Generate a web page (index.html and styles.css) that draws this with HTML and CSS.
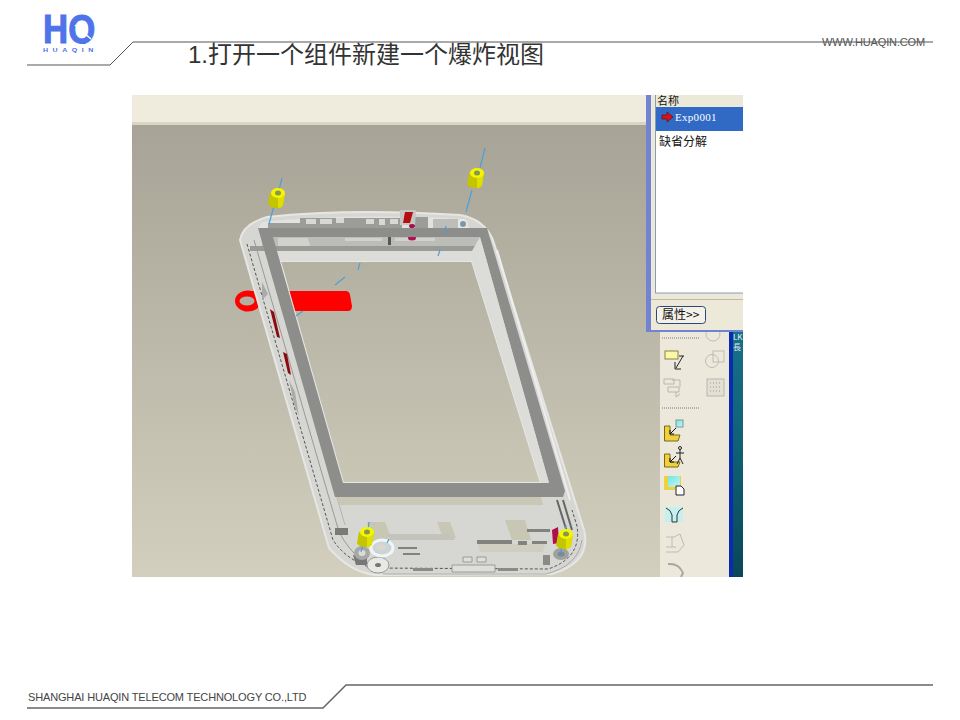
FILE: index.html
```html
<!DOCTYPE html>
<html lang="zh">
<head>
    <meta charset="UTF-8">
    <title>爆炸视图</title>
    <link rel="stylesheet" href="styles.css">
</head>
<body>
    <div class="slide">
        <header class="top">
            <svg class="rule" width="960" height="95">
                <polyline points="27,65 110,65 133,42 933,42" fill="none" stroke="#555" stroke-width="1"></polyline>
            </svg>
            <svg class="logo" width="64" height="46" viewBox="0 0 64 46">
                <defs>
                    <clipPath id="logo-clip"><rect x="0" y="0" width="64" height="31"></rect></clipPath>
                </defs>
                <g clip-path="url(#logo-clip)">
                    <text class="logo-hq" transform="translate(2 30) scale(0.87 1)">HQ</text>
                </g>
                <line x1="34" y1="12" x2="50" y2="26" stroke="#fff" stroke-width="1.5"></line>
                <text class="logo-name" transform="translate(2 39) scale(1.4 1)" textLength="36">HUAQIN</text>
            </svg>
            <h1 class="title">1.打开一个组件新建一个爆炸视图</h1>
            <span class="url">WWW.HUAQIN.COM</span>
        </header>

        <main class="shot">
            <svg width="611" height="482" viewBox="132 95 611 482">
                <defs>
                    <linearGradient id="view" x1="0" y1="0" x2="0" y2="1">
                        <stop offset="0" stop-color="#a7a497"></stop>
                        <stop offset="1" stop-color="#d2cfbe"></stop>
                    </linearGradient>
                    <linearGradient id="teal" x1="0" y1="0" x2="0" y2="1">
                        <stop offset="0" stop-color="#17708a"></stop>
                        <stop offset="0.5" stop-color="#0f5f74"></stop>
                        <stop offset="1" stop-color="#0a4658"></stop>
                    </linearGradient>
                    <linearGradient id="cyan" x1="0" y1="0" x2="1" y2="1">
                        <stop offset="0" stop-color="#6fe6e0"></stop>
                        <stop offset="1" stop-color="#c8f4f0"></stop>
                    </linearGradient>
                    <g id="bolt">
                        <path d="M-7 -4 L-9 7 Q-7 11 -1 11 Q5 11 6 8 L8 -4 Z" fill="#c4c400"></path>
                        <path d="M1 -4 L1 11 Q5 11 6 8 L8 -4 Z" fill="#e0e000"></path>
                        <ellipse cx="1" cy="-4" rx="7" ry="5" fill="#f6f400"></ellipse>
                        <ellipse cx="1" cy="-4" rx="3" ry="2.5" fill="#7f9a50"></ellipse>
                    </g>
                </defs>

                <!-- viewport -->
                <rect x="132" y="125" width="528" height="452" fill="url(#view)"></rect>
                <rect x="132" y="95" width="528" height="29" fill="#efecde"></rect>
                <rect x="132" y="122" width="528" height="3" fill="#d8d5c6"></rect>

                <!-- red part behind the housing -->
                <ellipse cx="248" cy="301" rx="13" ry="10.5" fill="#f00"></ellipse>
                <ellipse cx="247" cy="301" rx="7.5" ry="4.5" fill="#b3b0a2"></ellipse>
                <path d="M250 291 H346 Q349 291 350 295 L352 306 Q352 311 348 311 H262 Z" fill="#f00"></path>

                <!-- housing -->
                <path fill-rule="evenodd" fill="#d6d6d3" stroke="#e6e6e3" stroke-width="2" d="M240 240 Q243 224 267 217 Q350 208 460 215 Q484 219 493 240 L584 530 Q592 562 552 574 L375 575 Q350 572 329 548 Z M280 261 L472 261 L541 483 L343 483 Z"></path>
                <path d="M247 244 L333 540 Q346 560 372 568 L548 569 Q582 558 577 526 L572 510" fill="none" stroke="#555" stroke-width="1" stroke-dasharray="3 2"></path>
                <path d="M254 240 L339 532 Q350 552 362 560" fill="none" stroke="#999" stroke-width="1"></path>
                <path d="M262 240 L345 525" fill="none" stroke="#b4b4b1" stroke-width="1"></path>
                <path d="M497 250 L570 500" fill="none" stroke="#eee" stroke-width="2"></path>
                <path d="M383 574 L546 574 Q578 566 582 540" fill="none" stroke="#aaa" stroke-width="1"></path>

                <!-- top edge details -->
                <path d="M262 222 Q350 213 462 219 L470 228 H258 Z" fill="#e2e2e0"></path>
                <path d="M268 223 H300 V228 H268 Z M300 218 H402 V228 H300 Z M415 217 H428 V228 H415 Z" fill="#9c9c99"></path>
                <path d="M433 219 H458 V228 H433 Z" fill="#bdbdba"></path>
                <path d="M306 219 H316 V224 H306 Z M320 219 H332 V224 H320 Z M336 218 H344 V223 H336 Z M366 219 H374 V224 H366 Z M379 219 H385 V225 H379 Z M390 219 H398 V224 H390 Z" fill="#d8d8d5"></path>
                <path d="M400 210 L416 210 L415 225 L400 225 Z" fill="#c6c6c3"></path>
                <path d="M405 212 L413 212 L410 223 L403 223 Z" fill="#b50d10"></path>
                <ellipse cx="412" cy="226" rx="3" ry="2" fill="#a0104a"></ellipse>
                <circle cx="463" cy="224" r="4" fill="#7b98a8" stroke="#e8e8e6" stroke-width="2"></circle>
                <rect x="262" y="237" width="220" height="9" fill="#bcbcb9"></rect>
                <path d="M278 238 H308 L310 246 H278 Z M345 238 H382 V241 H345 Z M395 238 H435 V241 H395 Z" fill="#d2d2cc"></path>
                <rect x="388" y="237" width="3" height="8" fill="#555"></rect>
                <rect x="250" y="246" width="231" height="5" fill="#9a9a97"></rect>
                <rect x="266" y="251" width="215" height="10" fill="#dcdcd9"></rect>
                <ellipse cx="412" cy="238" rx="4" ry="2.5" fill="#b01050"></ellipse>

                <!-- side buttons -->
                <path d="M270 309 L274 312 L280 338 L277 337 Z" fill="#8d0a10"></path>
                <path d="M283 352 L287 354 L291 375 L288 373 Z" fill="#8d0a10"></path>
                <path d="M262 282 L268 294 L262 300 Z M289 380 L295 392 L299 416 L294 404 Z" fill="#aaa"></path>

                <!-- frame -->
                <path fill-rule="evenodd" fill="#8d8d8b" d="M258 228 H487 L565 491 L563 497 H335 Z M273 237 L480 237 L549 483 H343 Z"></path>
                <path d="M480 237 L549 483 L541 483 L472 261 L472 251 Z" fill="#dcdcd9"></path>

                <!-- bottom details -->
                <path d="M337 497 H541 L543 505 H340 Z" fill="#c9c7b6"></path>
                <path d="M367 522 H385 L390 535 L385 542 H372 Z M437 522 H450 L456 538 H443 Z M505 520 H525 L531 540 H512 Z" fill="#c8c7b4"></path>
                <path d="M387 534 H450 L455 540 H390 Z" fill="#c4c4bc"></path>
                <path d="M478 544 H545 L543 552 H480 Z" fill="#cfcec0"></path>
                <path d="M477 540 H512 V544 H477 Z M518 541 H527 V545 H518 Z M532 541 H547 V544 H532 Z M527 529 H550 V532 H527 Z M398 547 H417 V549 H398 Z M403 553 H420 V555 H403 Z" fill="#82827f"></path>
                <path d="M413 568 H433 V571 H413 Z M498 568 H518 V571 H498 Z M543 555 H550 V565 H543 Z" fill="#8a8a87"></path>
                <path d="M335 528 H348 V535 H335 Z" fill="#7a7a77"></path>
                <path d="M452 565 H495 V572 H452 Z M463 557 H472 V562 H463 Z M477 557 H486 V562 H477 Z" fill="#dededb" stroke="#9a9a97" stroke-width="1"></path>
                <path d="M557 500 L567 532 M563 500 L572 530" stroke="#666" stroke-width="2" fill="none"></path>
                <path d="M353 555 H367 V565 H356 Z" fill="#777"></path>
                <ellipse cx="362" cy="553" rx="8" ry="7" fill="#a8a8a5"></ellipse>
                <ellipse cx="362" cy="553" rx="3.5" ry="3" fill="#dcdcd9"></ellipse>
                <ellipse cx="378" cy="565" rx="11" ry="8" fill="#e8e8e5" stroke="#999" stroke-width="1"></ellipse>
                <ellipse cx="378" cy="565" rx="3" ry="2" fill="#777"></ellipse>
                <ellipse cx="561" cy="554" rx="8" ry="6" fill="#a0a09d"></ellipse>
                <ellipse cx="561" cy="554" rx="3.5" ry="2.5" fill="#6f8fa0"></ellipse>
                <ellipse cx="382" cy="548" rx="11" ry="8" fill="#ccd4d4" stroke="#eef6fa" stroke-width="3"></ellipse>
                <ellipse cx="381" cy="547" rx="5" ry="3" fill="#d8d8d0"></ellipse>
                <path d="M552 530 L558 527 L559 543 L553 544 Z" fill="#b0104a"></path>

                <!-- explode lines -->
                <path d="M282 178 L279 190 M274 206 L269 224 M485 148 L480 168 M472 190 L466 212 M446 226 L444 234 M440 250 L438 256 M360 263 L358 270 M345 277 L335 285 M303 311 L296 316 M369 522 L368 530 M363 545 L361 552 M389 539 L387 543 M566 525 L565 532 M561 548 L561 552" stroke="#4d9fd8" stroke-width="1.2" fill="none"></path>

                <use href="#bolt" x="277" y="197"></use>
                <use href="#bolt" x="476" y="177"></use>
                <use href="#bolt" x="366" y="536"></use>
                <use href="#bolt" x="565" y="538"></use>

                <!-- toolbar on the right -->
                <rect x="660" y="330" width="70" height="247" fill="#ece9dc"></rect>
                <rect x="729" y="330" width="4" height="247" fill="#0a2ab0"></rect>
                <rect x="733" y="330" width="10" height="247" fill="url(#teal)"></rect>
                <text class="strip" x="733" y="340">LK</text>
                <text class="strip" x="733" y="350">長</text>

                <path d="M662 338 H700 M662 408 H700" stroke="#777" stroke-width="1" stroke-dasharray="1 1" fill="none"></path>
                <circle cx="713" cy="334" r="7" fill="none" stroke="#c0bfb4"></circle>
                <rect x="665" y="351" width="13" height="8" fill="#fdf8a8" stroke="#8a8040"></rect>
                <path d="M683 356 L676 368 M675 362 V369 H681 M679 356 H684" fill="none" stroke="#222" stroke-width="1"></path>
                <circle cx="712" cy="361" r="6.5" fill="none" stroke="#bdbcb0"></circle>
                <rect x="713" y="351" width="11" height="11" fill="none" stroke="#bdbcb0"></rect>
                <path d="M664 379 H674 V384 H664 Z M668 387 H679 V392 H668 Z M672 380 H680 L680 387 M676 392 V397 L680 394" fill="none" stroke="#b8b7ab"></path>
                <rect x="707" y="379" width="17" height="17" fill="#e2e0d4" stroke="#b8b7ab"></rect>
                <path d="M710 383 H721 M710 387 H721 M710 391 H721" stroke="#999" stroke-width="1" stroke-dasharray="1 2"></path>

                <path d="M664.5 426 H670 V435 H680 L678 441 H664.5 Z" fill="#f0d040" stroke="#7a6a10"></path>
                <path d="M676 428 L670 434 M670 430 V434 H674" fill="none" stroke="#111"></path>
                <rect x="676" y="420" width="7" height="7" fill="url(#cyan)" stroke="#7a9a9a"></rect>
                <path d="M664.5 454 H670 V462 H680 L678 467 H664.5 Z" fill="#f0d040" stroke="#7a6a10"></path>
                <path d="M676 456 L670 462 M670 458 V462 H674" fill="none" stroke="#111"></path>
                <path d="M680 449 V458 M676 453 H684 M680 458 L677 464 M680 458 L683 464" fill="none" stroke="#222"></path>
                <circle cx="680" cy="448" r="1.5" fill="none" stroke="#222"></circle>
                <path d="M664 476 H681 V488 H675 V490 H664 Z" fill="#f0d040"></path>
                <rect x="668" y="476" width="12" height="11" fill="url(#cyan)"></rect>
                <path d="M676 486 H681 L684 489 V495 H676 Z" fill="#fff" stroke="#222"></path>
                <rect x="665" y="507" width="18" height="15" fill="#c4f0f0"></rect>
                <path d="M666 508 Q671 510 672 515 V522 H677 V515 Q678 510 683 508" fill="none" stroke="#333"></path>
                <path d="M666 537 H674 L680 534 L684 545 L678 552 H666 M672 537 V547 M666 547 H676" fill="none" stroke="#bdbcb0"></path>
                <path d="M668 564 Q679 563 683 573 L681 577" fill="none" stroke="#a8a79c" stroke-width="2"></path>

                <!-- dialog -->
                <rect x="646" y="95" width="97" height="237" fill="#7283d2"></rect>
                <rect x="651" y="95" width="92" height="235" fill="#ece9d8"></rect>
                <rect x="655.5" y="95" width="88" height="198" fill="#fff" stroke="#8c9cb0"></rect>
                <rect x="656" y="95" width="87" height="12" fill="#ece9d8"></rect>
                <text class="list-text list-head" x="657" y="105">名称</text>
                <rect x="656" y="107" width="87" height="24" fill="#316ac5"></rect>
                <path d="M662 115 H667 V112 L673 117 L667 122 V119 H662 Z" fill="#e01010" stroke="#400" stroke-width="0.5"></path>
                <text class="exp" x="675" y="121">Exp0001</text>
                <text class="list-text" x="659" y="146">缺省分解</text>
                <rect x="651" y="299" width="92" height="1" fill="#bdbaa8"></rect>
                <rect x="656.5" y="306.5" width="49" height="17" rx="3" fill="#f4f2e8" stroke="#2a4a70"></rect>
                <text class="list-text" x="662" y="319">属性&gt;&gt;</text>
            </svg>
        </main>

        <footer class="bottom">
            <svg class="rule" width="960" height="40">
                <polyline points="27,31 323,31 346,8 933,8" fill="none" stroke="#666" stroke-width="1.5"></polyline>
            </svg>
            <span class="company">SHANGHAI HUAQIN TELECOM TECHNOLOGY CO.,LTD</span>
        </footer>
    </div>
</body>
</html>
```

FILE: styles.css
```css
body {
    margin: 0;
    background-color: #fff;
    font-family: "Liberation Sans", "Noto Sans CJK SC", sans-serif;
    color: #333;
}
.slide {
    width: 960px;
    height: 720px;
    display: flex;
    flex-direction: column;
    overflow: hidden;
}
.top {
    position: relative;
    height: 95px;
    display: flex;
    align-items: flex-start;
    flex-shrink: 0;
}
.rule {
    position: absolute;
    top: 0;
    left: 0;
}
.logo {
    position: relative;
    margin: 13px 0 0 41px;
}
.logo-hq {
    font-family: "Liberation Sans", sans-serif;
    font-weight: bold;
    font-size: 40px;
    fill: #4f73e8;
    stroke: #4f73e8;
    stroke-width: 1px;
}
.logo-name {
    font-family: "Liberation Sans", sans-serif;
    font-size: 5px;
    font-weight: bold;
    fill: #4f73e8;
}
.title {
    position: relative;
    margin: 40px 0 0 83px;
    font-size: 24px;
    line-height: 30px;
    font-weight: normal;
    color: #333;
    white-space: nowrap;
}
.url {
    position: relative;
    margin: 35px 0 0 auto;
    padding-right: 35px;
    font-size: 11px;
    line-height: 14px;
    letter-spacing: -0.15px;
    color: #555;
}
.shot {
    margin-left: 132px;
    width: 611px;
    height: 482px;
    flex-shrink: 0;
}
.shot svg {
    display: block;
}
.list-text {
    font-family: "Noto Sans CJK SC", sans-serif;
    font-size: 12px;
    fill: #111;
}
.list-head {
    font-size: 11px;
}
.exp {
    font-family: "Liberation Serif", serif;
    font-size: 11px;
    fill: #fff;
    letter-spacing: 0.3px;
}
.strip {
    font-family: "Noto Sans CJK SC", sans-serif;
    font-size: 8px;
    fill: #e8f0f4;
}
.bottom {
    position: relative;
    margin-top: auto;
    margin-bottom: 3px;
    height: 40px;
    display: flex;
    align-items: center;
    flex-shrink: 0;
}
.company {
    position: relative;
    margin: 0 0 0 28px;
    font-size: 11px;
    letter-spacing: -0.15px;
    color: #444;
}
```
